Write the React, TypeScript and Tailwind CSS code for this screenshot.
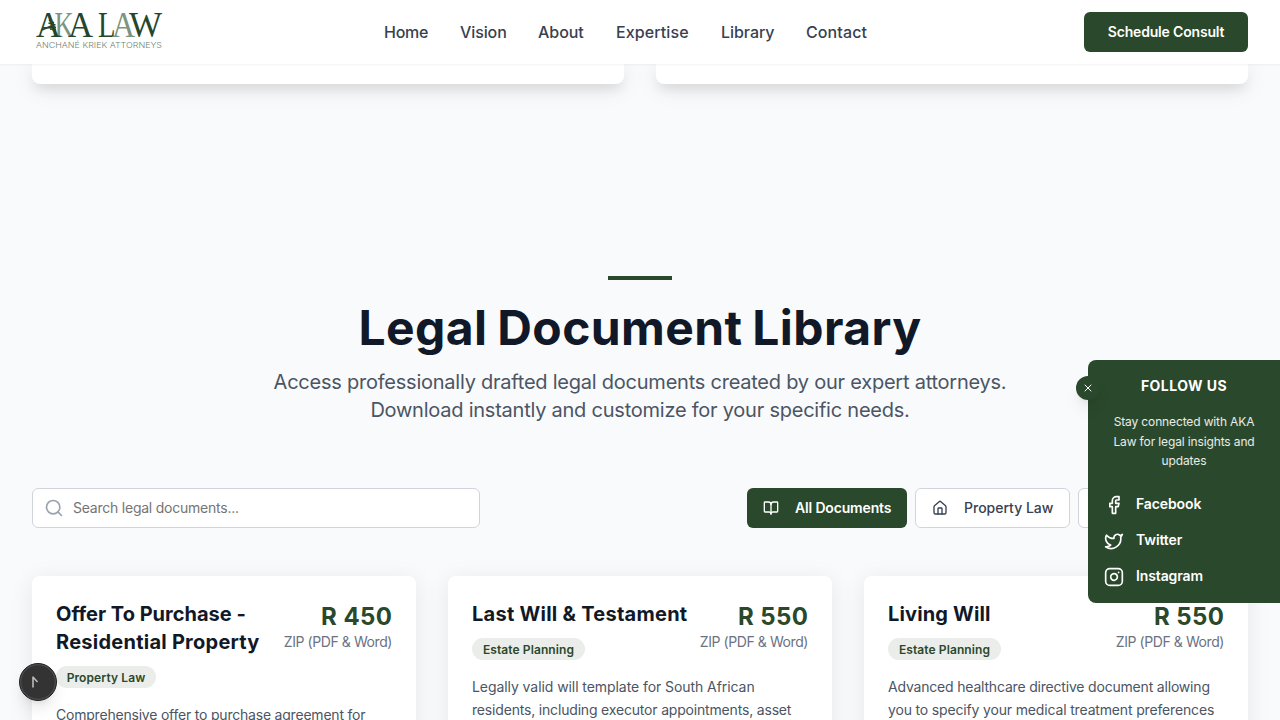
import { BookOpen, Facebook, Home, Instagram, Search, Twitter, X } from "lucide-react";

const nav = [
  { label: "Home", width: "w-[44px]", tracking: "tracking-[-0.25px]" },
  { label: "Vision", width: "w-[46px]", tracking: "tracking-[-0.1px]" },
  { label: "About", width: "w-[46px]", tracking: "tracking-[-0.05px]" },
  { label: "Expertise", width: "w-[73px]", tracking: "tracking-[0.1px]" },
  { label: "Library", width: "w-[53px]", tracking: "tracking-[-0.05px]" },
  { label: "Contact", width: "w-[61px]", tracking: "tracking-[0.1px]" },
];

const documents = [
  {
    title: [
      { text: "Offer To Purchase -", tracking: "tracking-[0px]" },
      { text: "Residential Property", tracking: "tracking-[0.25px]" },
    ],
    price: "R 450",
    tag: "Property Law",
    tagWidth: "w-[100px]",
    text: [{ text: "Comprehensive offer to purchase agreement for", tracking: "tracking-[-0.21px]" }],
  },
  {
    title: [{ text: "Last Will & Testament", tracking: "tracking-[0.26px]" }],
    price: "R 550",
    tag: "Estate Planning",
    tagWidth: "w-[113px]",
    text: [
      { text: "Legally valid will template for South African", tracking: "tracking-[-0.07px]" },
      { text: "residents, including executor appointments, asset", tracking: "tracking-[-0.18px]" },
    ],
  },
  {
    title: [{ text: "Living Will", tracking: "tracking-[0.15px]" }],
    price: "R 550",
    tag: "Estate Planning",
    tagWidth: "w-[113px]",
    text: [
      { text: "Advanced healthcare directive document allowing", tracking: "tracking-[-0.19px]" },
      { text: "you to specify your medical treatment preferences", tracking: "tracking-[-0.16px]" },
    ],
  },
];

const socials = [
  { label: "Facebook", Icon: Facebook },
  { label: "Twitter", Icon: Twitter },
  { label: "Instagram", Icon: Instagram },
];

function Logo() {
  return (
    <svg width="134" height="48" viewBox="32 4 134 48" className="block">
      <g fontFamily="Liberation Serif, serif" fontSize="35">
        <text x="54.500" y="36.700" textLength="19" lengthAdjust="spacingAndGlyphs" fill="#7d9480">K</text>
        <text x="36" y="36.700" textLength="25" lengthAdjust="spacingAndGlyphs" fill="#24472b">A</text>
        <text x="68" y="36.700" textLength="25" lengthAdjust="spacingAndGlyphs" fill="#24472b">A</text>
        <text x="98" y="36.700" textLength="17.500" lengthAdjust="spacingAndGlyphs" fill="#24472b">L</text>
        <text x="112" y="36.700" textLength="23" lengthAdjust="spacingAndGlyphs" fill="#7d9480">A</text>
        <text x="129" y="36.700" textLength="33" lengthAdjust="spacingAndGlyphs" fill="#24472b">W</text>
      </g>
      <path
        d="M49 20l5 3M48.500 23l7 2M50 26l6 1.500M50 29l6 .5M52 21l1.500 10M42 30l9-4"
        fill="none"
        stroke="#24472b"
        strokeWidth="1.500"
      />
      <text
        x="36"
        y="48.200"
        fontFamily="Inter, sans-serif"
        fontWeight="300"
        fontSize="8.200"
        textLength="126"
        lengthAdjust="spacingAndGlyphs"
        fill="#6f8373"
      >
        ANCHANÉ KRIEK ATTORNEYS
      </text>
    </svg>
  );
}

function Header() {
  return (
    <header className="relative z-20 flex h-16 shrink-0 items-center justify-between bg-white px-8 shadow-[0_1px_2px_0_rgba(0,0,0,0.05)]">
      <div className="h-14 w-[134px]">
        <Logo />
      </div>
      <nav className="absolute left-[384px] top-5 flex gap-8 whitespace-nowrap font-medium leading-6 text-[#374151]">
        {nav.map((item) => (
          <a key={item.label} className={`${item.width} ${item.tracking}`}>
            {item.label}
          </a>
        ))}
      </nav>
      <button className="flex h-10 w-[164px] items-center justify-center rounded-md bg-[#2a482b] text-sm font-semibold tracking-[-0.18px] text-white">
        Schedule Consult
      </button>
    </header>
  );
}

function DocumentCard({ doc }: { doc: (typeof documents)[number] }) {
  return (
    <article className="h-[300px] rounded-lg bg-white p-6 shadow-[0_4px_24px_0_rgba(0,0,0,0.08)]">
      <div className="flex justify-between whitespace-nowrap">
        <div>
          <h3 className="text-xl font-bold leading-7 text-[#111827]">
            {doc.title.map((line) => (
              <span key={line.text} className={`block ${line.tracking}`}>
                {line.text}
              </span>
            ))}
          </h3>
          <span
            className={`mt-2.5 flex h-[22px] ${doc.tagWidth} items-center justify-center rounded-full bg-[#eaedea] pt-px text-xs font-semibold tracking-[0.1px] text-[#2a482b]`}
          >
            {doc.tag}
          </span>
        </div>
        <div className="flex flex-col items-end">
          <div className="-mr-[0.5px] pt-px text-2xl font-bold leading-[31px] tracking-[0.45px] text-[#2a482b]">
            {doc.price}
          </div>
          <div className="text-sm tracking-[-0.42px] text-[#6b7280]">ZIP (PDF &amp; Word)</div>
        </div>
      </div>
      <p className="mt-4 whitespace-nowrap text-sm leading-[22.75px] text-[#4b5563]">
        {doc.text.map((line) => (
          <span key={line.text} className={`block ${line.tracking}`}>
            {line.text}
          </span>
        ))}
      </p>
    </article>
  );
}

function SocialPanel() {
  return (
    <aside className="absolute left-[1088px] top-[360px] z-30 h-[243px] w-48 rounded-l-lg bg-[#2a482b] px-4 pt-4 text-white">
      <button className="absolute -left-3 top-4 flex size-6 items-center justify-center rounded-full bg-[#2a482b] shadow-lg">
        <X size={12} strokeWidth={2} />
      </button>
      <h4 className="text-center text-sm font-bold tracking-[0.45px]">FOLLOW US</h4>
      <p className="mt-4 text-center text-xs leading-[19.5px] tracking-[-0.13px] text-white/90">
        Stay connected with AKA
        <br />
        Law for legal insights and
        <br />
        updates
      </p>
      <ul className="mt-6 flex flex-col gap-4">
        {socials.map(({ label, Icon }) => (
          <li key={label} className="flex h-5 items-center gap-3">
            <Icon size={20} className="mt-px" />
            <span className="-mt-px text-sm font-semibold tracking-[-0.12px]">{label}</span>
          </li>
        ))}
      </ul>
    </aside>
  );
}

export default function App() {
  return (
    <div className="relative flex h-[720px] w-[1280px] flex-col overflow-hidden bg-[#f9fafc] font-['Inter',sans-serif]">
      <Header />
      <div className="grid h-5 shrink-0 grid-cols-2 gap-8 px-8">
        <div className="rounded-b-lg bg-white shadow-[0_8px_12px_-3px_rgba(0,0,0,0.09),0_4px_24px_0_rgba(0,0,0,0.09)]" />
        <div className="rounded-b-lg bg-white shadow-[0_8px_12px_-3px_rgba(0,0,0,0.09),0_4px_24px_0_rgba(0,0,0,0.09)]" />
      </div>
      <section className="mt-48 flex flex-col items-center whitespace-nowrap">
        <div className="h-1 w-16 bg-[#2a482b]" />
        <h2 className="mt-6 text-5xl font-bold leading-[48px] tracking-[0.4px] text-[#111827] [word-spacing:-2px]">
          Legal Document Library
        </h2>
        <p className="mt-4 text-center text-xl tracking-[-0.235px] text-[#4b5563]">
          <span className="block">Access professionally drafted legal documents created by our expert attorneys.</span>
          <span className="block">Download instantly and customize for your specific needs.</span>
        </p>
      </section>
      <div className="mt-16 flex h-10 shrink-0 justify-between pl-8">
        <label className="flex w-[448px] items-center rounded-md border border-[#d1d5db] bg-white pl-[11px] text-sm tracking-[-0.23px] text-[#757575]">
          <Search size={20} className="mr-[9px] text-[#9ca3af]" />
          Search legal documents...
        </label>
        <div className="flex w-[533px] gap-2 overflow-hidden whitespace-nowrap text-sm">
          <button className="flex w-[160px] shrink-0 items-center gap-4 rounded-md bg-[#2a482b] pl-4 font-semibold tracking-[-0.16px] text-white">
            <BookOpen size={16} />
            All Documents
          </button>
          <button className="flex w-[155px] shrink-0 items-center gap-4 rounded-md border border-[#d1d5db] bg-white pl-4 font-medium text-[#374151]">
            <Home size={16} />
            Property Law
          </button>
          <button className="w-[170px] shrink-0 rounded-md border border-[#d1d5db] bg-white" />
        </div>
      </div>
      <main className="mt-12 grid grid-cols-3 gap-8 px-8">
        {documents.map((doc) => (
          <DocumentCard key={doc.title[0].text} doc={doc} />
        ))}
      </main>
      <SocialPanel />
      <div className="absolute left-[19px] top-[663px] z-30 flex size-[38px] items-center justify-center rounded-full border border-[#222] bg-[#333] shadow-lg">
        <svg width="36" height="36" viewBox="0 0 36 36" fill="none">
          <circle cx="18" cy="18" r="17.300" stroke="#5a5a5a" strokeWidth="0.800" />
          <path d="M13 12.500v11M13 13l4.500 5" stroke="#bbb" strokeWidth="1.600" />
        </svg>
      </div>
    </div>
  );
}
